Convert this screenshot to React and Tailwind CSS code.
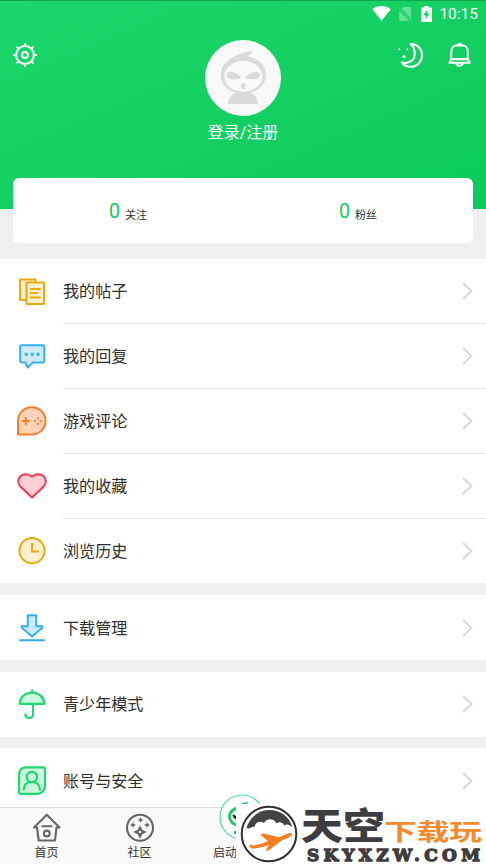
import React from "react";

const GearIcon = () => (
  <svg width="26" height="26" viewBox="0 0 26 26" fill="none" stroke="#fff" strokeWidth="2">
    <circle cx="13" cy="13" r="8.9" />
    <circle cx="13" cy="13" r="2.9" />
    <path d="M13 4V1M13 22v3M4 13H1M22 13h3M6.7 6.7L4.6 4.6M19.3 6.7l2.1-2.1M6.7 19.3l-2.1 2.1M19.3 19.3l2.1 2.1" />
  </svg>
);

const MoonIcon = () => (
  <svg width="27" height="27" viewBox="0 0 27 27" fill="none" stroke="#fff" strokeWidth="2.1" strokeLinejoin="round">
    <path d="M13 1.500C20 1.200 25 6.500 25 13.200C25 20 19.800 25.200 13.200 25.200C9 25.200 5.500 23 3.800 20.600C10 22.500 16.500 19.500 17.300 13C17.800 8.500 16.300 4 13 1.500Z" />
    <g fill="#fff" stroke="none">
      <circle cx="6.300" cy="14.600" r="1.700" />
      <circle cx="1.300" cy="7" r="1" />
      <circle cx="9.600" cy="7" r="1" />
    </g>
  </svg>
);

const BellIcon = () => (
  <svg width="24" height="26" viewBox="0 0 24 26" fill="none" stroke="#fff" strokeWidth="2.1" strokeLinejoin="round" strokeLinecap="round">
    <path d="M3.400 17.300V9.500C3.400 5.500 6 3.100 9 3.100h6c3 0 5.600 2.400 5.600 6.400v7.800l2 3.700H1.400zM3.400 17.300h17.200" />
    <path d="M10 2.400c.5-1.400 3.500-1.400 4 0" />
    <path d="M8.500 21.500c.5 3.500 6.500 3.500 7 0" />
  </svg>
);

const Avatar = () => (
  <svg width="76" height="76" viewBox="0 0 76 76">
    <circle cx="38" cy="38" r="38" fill="#f9f9f9" />
    <path d="M23 64C23 58 27 54 32 52.500h12C49 54 53 58 53 64z" fill="#dadada" />
    <path d="M47.500 11C38 12 28 16 22 21.500C17.500 25.500 15.600 30 15.600 35C15.600 46 26 53.700 38.200 53.700S60.900 46 60.900 35C60.900 25 53 17.500 41.500 16.300C45 14.500 47.500 14 47.500 11z" fill="#dadada" />
    <ellipse cx="38.400" cy="36.300" rx="19.100" ry="15.400" fill="#f9f9f9" />
    <path d="M36.500 37.500C33 34 28 31 24.500 32C21 33 20.500 36.500 24 38.500C28 40 33 39.500 36.500 37.500zM40 37.500C43.500 34 48.500 31 52 32C56 33 56 36.500 52.500 38.500C48.500 40 43.500 39.500 40 37.500z" fill="#dadada" />
    <ellipse cx="38.200" cy="46" rx="2.200" ry="3.200" fill="#dadada" />
  </svg>
);

const icons = {
  posts: (
    <g stroke="#e8ab0e" fill="#fcefcf" strokeWidth="2">
      <path d="M4 3.500h15.500V24H4z" strokeLinejoin="round" />
      <path d="M10.500 6.500h17.500V28H10.500z" strokeLinejoin="round" />
      <path d="M15 13h9M14.500 17h6.500M14.500 21.500h9.500" strokeLinecap="round" />
    </g>
  ),
  replies: (
    <g stroke="#35aef0" fill="#cdeafb" strokeWidth="2" strokeLinejoin="round">
      <path d="M5.500 4.300h21.500c.8 0 1.300.5 1.300 1.300v14.500c0 .8-.5 1.300-1.300 1.300H17l-5.400 5.200L9.500 21.400h-4c-.8 0-1.300-.5-1.300-1.300V5.600C4.200 4.800 4.700 4.300 5.500 4.300z" />
      <path d="M10.300 13.300h.01M16.200 13.300h.01M22 13.300h.01" strokeLinecap="round" strokeWidth="3.400" />
    </g>
  ),
  games: (
    <g stroke="#fa7d2c" fill="#fdd3b9" strokeWidth="2">
      <path d="M2 29.500V16.500C2 8 8 2.200 15.800 2.200C23.600 2.200 29.500 8.200 29.500 16C29.500 23.700 23.500 29.500 16 29.500z" strokeLinejoin="round" />
      <path d="M5.800 16h8M9.800 12v8" />
      <path d="M21.800 13.300h.01M21.800 18.900h.01M19 16.100h.01M24.600 16.100h.01" strokeWidth="2.300" strokeLinecap="round" />
    </g>
  ),
  favorites: (
    <path d="M16 27.500L4.300 16.500C1.500 13.500 1.500 9 4.500 6.200C7.500 3.700 12.500 3.600 16 6.700C19.500 3.600 24.500 3.700 27.500 6.200C30.500 9 30.500 13.500 27.700 16.500z" stroke="#f7364f" fill="#fdcfd5" strokeWidth="2" strokeLinejoin="round" />
  ),
  history: (
    <g stroke="#e8ab0e" fill="#fcefcf" strokeWidth="2">
      <circle cx="16" cy="15.700" r="12.600" />
      <path d="M16 7.700v8.800h6.800" />
    </g>
  ),
  download: (
    <g stroke="#35aef0" fill="#cdeafb" strokeWidth="2" strokeLinejoin="round">
      <path d="M11.800 3.200h8.400v11h6l-.1 1.900L16 24.500L6 16.100l-.1-1.900h5.900z" />
      <path d="M4 28.300h24" strokeLinecap="round" />
    </g>
  ),
  teen: (
    <g stroke="#20d770" fill="#cdf6df" strokeWidth="2.200" strokeLinecap="round" strokeLinejoin="round">
      <path d="M16.200 4.500V2.500" />
      <path d="M3.800 15.800C3.800 9.500 9 4.600 16.200 4.600S28.200 9.500 28.200 15.800z" />
      <path d="M17 16v10.200c0 5-7 5-7.700.2" fill="none" />
    </g>
  ),
  account: (
    <g stroke="#20d770" fill="#cdf6df" strokeWidth="2.200" strokeLinejoin="round">
      <path d="M9.500 2.300h17.500c1.200 0 2 .8 2 2v16.500c0 4.500-3 8-7.500 8H5c-1.200 0-2-.8-2-2V10C3 5.500 5.500 2.300 9.500 2.300z" />
      <path d="M7.500 25.500c0-5.500 3.500-8.700 8.300-8.700s8.300 3.200 8.300 8.700" fill="none" />
      <circle cx="15.800" cy="12" r="5.200" />
    </g>
  ),
};

const groups = [
  [
    { icon: "posts", label: "我的帖子" },
    { icon: "replies", label: "我的回复" },
    { icon: "games", label: "游戏评论" },
    { icon: "favorites", label: "我的收藏" },
    { icon: "history", label: "浏览历史" },
  ],
  [{ icon: "download", label: "下载管理" }],
  [{ icon: "teen", label: "青少年模式" }],
  [{ icon: "account", label: "账号与安全" }],
];

const Row = ({ icon, label, last }) => (
  <div className="flex h-[64.8px] items-center bg-white pl-4">
    <svg width="32" height="32" viewBox="0 0 32 32" className="shrink-0">
      {icons[icon]}
    </svg>
    <div className={`ml-[15px] flex h-full flex-1 items-center justify-between pr-[13px] ${last ? "" : "border-b border-[#e2e2e2]"}`}>
      <span className="pt-[2px] text-[16.1px] text-[#2e2e2e]">{label}</span>
      <svg width="11" height="18" viewBox="0 0 11 18" fill="none" stroke="#d8d8d8" strokeWidth="2">
        <path d="M1 1l8.500 8L1 17" />
      </svg>
    </div>
  </div>
);

const Stat = ({ value, label }) => (
  <div className="flex flex-1 items-center justify-center gap-[5px] pt-[2px]">
    <span className="font-[Roboto] text-[19.5px] leading-6 text-[#11cb5f]">{value}</span>
    <span className="pt-[8px] text-[11px] leading-6 text-[#333]">{label}</span>
  </div>
);

const StatusBar = () => (
  <div className="flex h-[27px] items-center justify-end border-t border-[#12a44f] pr-[8px]">
    <svg width="19" height="15" viewBox="0 0 19 15" fill="#fff" className="mr-[7px] -mt-[2px]">
      <path d="M.3 3.200C5.500-1 13.500-1 18.700 3.200L9.500 14.700z" />
    </svg>
    <svg width="14" height="16" viewBox="0 0 14 16" className="mr-[9px] -mt-[1px]">
      <path d="M5.500 1H13v11.300L3.800 2.700zM1.200 5L11.200 15H1.200z" fill="#fff" opacity=".35" />
      <path d="M.5 1.700l13 13.300" stroke="#fff" opacity=".3" />
    </svg>
    <svg width="11" height="16" viewBox="0 0 11 16" className="mr-[7px] -mt-[1px]">
      <path d="M3.200 0h4.600v1.600H11V16H0V1.600h3.200z" fill="#fff" />
      <path d="M6.200 3.500L2.500 9.300h2.400L4.500 13.300L8.500 7.500H6z" fill="#13cd61" />
    </svg>
    <span className="pt-[1px] font-[Roboto] text-[15.500px] text-white">10:15</span>
  </div>
);

const Star = ({ d }) => <path d={d} fill="#666" />;

const HomeIcon = () => (
  <svg width="30" height="30" viewBox="0 0 30 30" fill="none" stroke="#666" strokeWidth="2.100" strokeLinejoin="round" strokeLinecap="round">
    <path d="M2 14.500L14.800 1.800l12.700 12.700h-3L23 27.500H6.700L5 14.500z" />
    <path d="M10.300 13.300h9" />
    <circle cx="14.800" cy="20.500" r="2.900" />
  </svg>
);

const CommunityIcon = () => (
  <svg width="30" height="30" viewBox="0 0 30 30" fill="none">
    <circle cx="15" cy="14.700" r="13" stroke="#666" strokeWidth="2.100" />
    <Star d="M15 12.200l2.300 4.500l4.500 2.300l-4.500 2.300L15 25.800l-2.300-4.500l-4.500-2.300l4.500-2.300z" />
    <circle cx="15" cy="19" r="1.200" fill="#fafafa" />
    <Star d="M15.500 4.200l.9 1.900l1.900.9l-1.900.9l-.9 1.900l-.9-1.900l-1.900-.9l1.900-.9z" />
    <Star d="M8 9l.9 2.100l2.100 .9l-2.100 .9l-.9 2.100l-.9-2.100l-2.100-.9l2.100-.9z" />
    <Star d="M22 9l.9 2.100l2.100 .9l-2.100 .9l-.9 2.100l-.9-2.100l-2.100-.9l2.100-.9z" />
  </svg>
);

const LaunchIcon = () => (
  <svg width="46" height="46" viewBox="0 0 46 46" fill="none">
    <circle cx="23" cy="23" r="22" fill="#fff" stroke="#4be08b" strokeWidth="1.200" />
    <path d="M24 13.500C15 13 10.500 18 10.500 22.500S14 31 20 31" stroke="#17c860" strokeWidth="2.800" />
    <path d="M13.500 20l4.500 2.500v3c-3 0-4.500-2.500-4.500-5.500z" fill="#26352c" />
    <path d="M20 11c3-2 5-3 9-3c-1 2-3 3-6 4z" fill="#17c860" />
    <path d="M16 37v3" stroke="#17c860" strokeWidth="2" />
  </svg>
);

const Watermark = () => (
  <svg width="250" height="60" viewBox="0 0 250 60" className="block overflow-visible">
    <circle cx="33" cy="30" r="27.300" fill="#fff" stroke="#2e2e32" strokeWidth="2" />
    <path d="M10.500 23.500C14 13.500 22 6 33 6C45 6 53.500 13 56.500 23.500C54 20.500 50 19.500 48.500 21.500C46 17 42 18 40.500 19.500C38 14 30.500 14 28 19C24 16.500 19.500 18 18.500 23C15.500 22 13 26.500 10.500 23.500z" fill="#444346" />
    <path d="M13 40.500l4.500 1l8-1.700l6.500-2.800L24 30.500l3.500-1L43 33.300L51 29.800C54 28.500 56.500 29 56 30.500C55 32.500 50 35 45.500 36.500L32.500 46.500l-3 .3l3.500-6C27 43.500 21 44.500 15 44.500z" fill="#f97f1d" />
    <g fontFamily="'Noto Sans CJK SC', sans-serif" fontWeight="900">
      <text x="65" y="36" fontSize="37" textLength="84" lengthAdjust="spacingAndGlyphs" fill="#3d3c3f">天空</text>
      <text x="148" y="36" fontSize="23" fontWeight="700" textLength="98" lengthAdjust="spacingAndGlyphs" fill="#f98a2b">下载玩</text>
    </g>
    <text x="71" y="56.500" fontSize="17" fontFamily="'DejaVu Serif', serif" fontWeight="700" textLength="173" lengthAdjust="spacing" fill="#3d3c3f" stroke="#3d3c3f" strokeWidth="1.300">SKYXZW.COM</text>
  </svg>
);

const Tab = ({ label, children }) => (
  <div className="flex w-[93px] flex-col items-center pt-[5px]">
    {children}
    <span className="mt-[1px] text-[12px] leading-[18px] text-[#333]">{label}</span>
  </div>
);

const App = () => {
  return (
    <div className="relative flex h-[864px] w-[486px] flex-col overflow-hidden bg-[#efefef] font-['Roboto','Noto_Sans_CJK_SC',sans-serif]">
      <header className="h-[209px] shrink-0 bg-linear-to-br from-[#1bd76b] to-[#0cc95b]">
        <StatusBar />
        <div className="flex items-start justify-between px-3">
          <div className="mt-[15px] w-[76px]">
            <GearIcon />
          </div>
          <div className="mt-[13px] flex flex-col items-center">
            <Avatar />
            <span className="mt-[5px] text-[16px] leading-6 text-white">登录/注册</span>
          </div>
          <div className="mt-[15px] flex w-[76px] justify-end gap-[24px] pr-[3px]">
            <MoonIcon />
            <BellIcon />
          </div>
        </div>
      </header>

      <div className="mx-[13px] -mt-[31px] flex h-[65px] shrink-0 items-center rounded-md bg-white">
        <Stat value="0" label="关注" />
        <Stat value="0" label="粉丝" />
      </div>

      <main className="mt-[16.400px] flex min-h-0 flex-1 flex-col gap-[11.800px] overflow-hidden">
        {groups.map((group, i) => (
          <section key={i} className="shrink-0">
            {group.map((item, j) => (
              <Row key={item.label} {...item} last={j === group.length - 1} />
            ))}
          </section>
        ))}
      </main>

      <nav className="flex h-[57px] shrink-0 border-t border-[#dedede] bg-[#fafafa]">
        <Tab label="首页">
          <HomeIcon />
        </Tab>
        <Tab label="社区">
          <CommunityIcon />
        </Tab>
        <div className="flex w-[93px] flex-col items-center">
          <div className="-mt-[14px] ml-[18px]">
            <LaunchIcon />
          </div>
          <span className="mt-[4px] mr-[15px] text-[12px] leading-[18px] text-[#333]">启动</span>
        </div>
      </nav>

      <div className="absolute right-0 bottom-0 bg-white">
        <Watermark />
      </div>
    </div>
  );
};

export default App;
